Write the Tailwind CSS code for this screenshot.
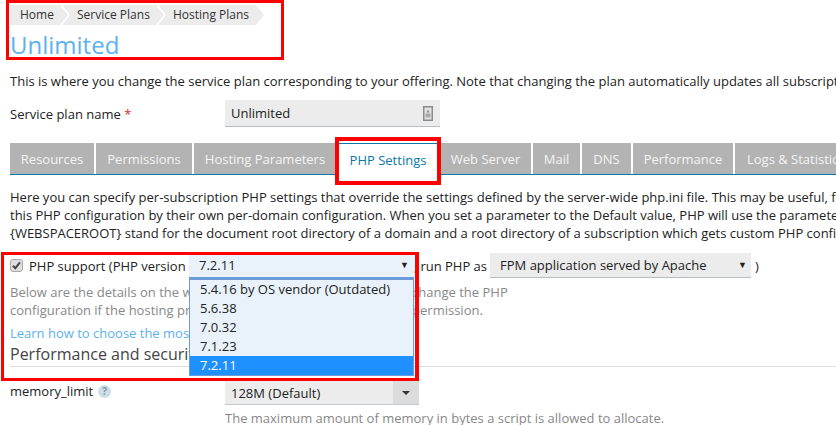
<!DOCTYPE html>
<html lang="en">
<head>
  <meta charset="UTF-8" />
  <title>Service Plan - Unlimited</title>
  <script src="https://cdn.jsdelivr.net/npm/@tailwindcss/browser@4"></script>
</head>
<body class="bg-white">
  <div class="relative w-[836px] h-[425px] overflow-hidden pl-[10px] pt-[5px] font-['Open_Sans',sans-serif] text-[13px] leading-[18px] text-[#222] whitespace-nowrap">

    <!-- breadcrumbs -->
    <div class="flex h-[20px] items-center text-[12px] text-[#333]">
      <div class="flex h-[20px] w-[58px] items-center pl-[10px] bg-[#ececec] [clip-path:polygon(0_0,50px_0,58px_10px,50px_100%,0_100%)]">Home</div>
      <div class="flex h-[20px] w-[102px] -ml-[6px] items-center pl-[15px] bg-[#ececec] [clip-path:polygon(0_0,94px_0,102px_10px,94px_100%,0_100%,8px_10px)]">Service Plans</div>
      <div class="flex h-[20px] w-[106px] -ml-[6px] items-center pl-[15px] bg-[#ececec] [clip-path:polygon(0_0,98px_0,106px_10px,98px_100%,0_100%,8px_10px)]">Hosting Plans</div>
    </div>
    <h1 class="mt-[3px] h-[33px] text-[24px] leading-[33px] text-[#5cb1ee]">Unlimited</h1>

    <p class="mt-[11px]">This is where you change the service plan corresponding to your offering. Note that changing the plan automatically updates all subscriptions based on it.</p>

    <div class="mt-[10px] flex items-center h-[27px]">
      <div class="w-[215px]">Service plan name <span class="text-[#e0271c]">*</span></div>
      <div class="flex h-[27px] w-[215px] items-center justify-between bg-[#ececec] border-b border-[#b5bcc2] pl-[6px] pr-[7px]">
        <span>Unlimited</span>
        <svg width="10" height="15" viewBox="0 0 10 15"><rect x="0.75" y="0.75" width="8.5" height="13.5" fill="#e4e4e4" stroke="#8a8a8a" stroke-width="1.5"/><path d="M5 3.5l1.5 3h-3z" fill="#8a8a8a"/><rect x="2.5" y="7.5" width="5" height="4" fill="#a8a8a8"/></svg>
      </div>
    </div>

    <!-- tabs -->
    <div class="mt-[16px] flex gap-[2px] h-[32px] border-b border-[#0b78a6] text-[13px] text-[#f4f4f4]">
      <div class="flex h-[31px] w-[84px] shrink-0 items-center justify-center bg-[#b3b3b3]">Resources</div>
      <div class="flex h-[31px] w-[96px] shrink-0 items-center justify-center bg-[#b3b3b3]">Permissions</div>
      <div class="flex h-[31px] w-[142px] shrink-0 items-center justify-center bg-[#b3b3b3]">Hosting Parameters</div>
      <div class="flex h-[32px] w-[101px] shrink-0 items-center justify-center bg-white border border-b-0 border-[#0b78a6] pr-[1px] text-[#0b78a6]">PHP Settings</div>
      <div class="flex h-[31px] w-[90px] shrink-0 items-center justify-center bg-[#b3b3b3] pr-[1px]">Web Server</div>
      <div class="flex h-[31px] w-[47px] shrink-0 items-center justify-center bg-[#b3b3b3]">Mail</div>
      <div class="flex h-[31px] w-[49px] shrink-0 items-center justify-center bg-[#b3b3b3]">DNS</div>
      <div class="flex h-[31px] w-[100px] shrink-0 items-center justify-center bg-[#b3b3b3]">Performance</div>
      <div class="flex h-[31px] w-[120px] shrink-0 items-center pl-[12px] bg-[#b3b3b3]">Logs &amp; Statistics</div>
    </div>

    <p class="mt-[13px]">Here you can specify per-subscription PHP settings that override the settings defined by the server-wide php.ini file. This may be useful, for example</p>
    <p>this PHP configuration by their own per-domain configuration. When you set a parameter to the Default value, PHP will use the parameter value</p>
    <p>{WEBSPACEROOT} stand for the document root directory of a domain and a root directory of a subscription which gets custom PHP configuration</p>

    <!-- php support row -->
    <div class="mt-[11px] flex h-[25px] items-center">
      <span class="flex h-[13px] w-[13px] shrink-0 items-center justify-center rounded-[3px] border border-[#aaa] bg-[#dedede]">
        <svg width="9" height="9" viewBox="0 0 9 9"><path d="M1 4.8l2.3 2.5 4.6-6" fill="none" stroke="#444" stroke-width="2"/></svg>
      </span>
      <span class="ml-[6px] w-[160px]">PHP support (PHP version</span>
      <div class="flex h-[25px] w-[225px] shrink-0 items-center justify-between bg-[#e9f2fa] border-b border-[#6d9ad8] pl-[10px] pr-[5px]">
        <span>7.2.11</span><span class="text-[9px]">▼</span>
      </div>
      <span>,</span>
      <span class="ml-[3px]">run PHP as</span>
      <div class="ml-[3px] flex h-[25px] w-[261px] shrink-0 items-center justify-between bg-[#ececec] border-b border-[#b5bcc2] pl-[10px] pr-[1px]">
        <span>FPM application served by Apache</span><span class="w-[12px] text-[9px]">▼</span>
      </div>
      <span class="ml-[4px]">)</span>
    </div>

    <p class="mt-[5px] text-[#888]">Below are the details on the website's PHP version in use. You can change the PHP</p>
    <p class="text-[#888]">configuration if the hosting provider has granted you the required permission.</p>
    <p class="mt-[5px] text-[#5cb1ee]">Learn how to choose the most suitable PHP version</p>
    <h2 class="h-[24px] text-[16px] leading-[24px] text-[#444]">Performance and security settings</h2>
    <div class="h-px w-[826px] bg-[#ddd]"></div>

    <div class="mt-[15px] flex h-[24px] items-start">
      <div class="flex w-[215px] items-center gap-[5px]">memory_limit
        <span class="flex h-[13px] w-[13px] items-center justify-center rounded-full bg-[#cddde6] text-[10px] font-bold leading-none text-[#7d98a8]">?</span>
      </div>
      <div class="-mt-[1px] flex h-[24px] w-[194px] items-center bg-[#ececec] border-b border-[#c4c9cd]">
        <span class="flex-1 pl-[6px]">128M (Default)</span>
        <span class="flex h-[23px] w-[26px] items-center justify-center bg-[#dcdcdc]"><span class="h-0 w-0 border-x-[4px] border-t-[4px] border-x-transparent border-t-[#333]"></span></span>
      </div>
    </div>
    <p class="ml-[215px] mt-[3px] text-[#888]">The maximum amount of memory in bytes a script is allowed to allocate.</p>

    <!-- open dropdown -->
    <ul class="absolute left-[189px] top-[278px] w-[225px] border border-t-2 border-[#6d9ad8] bg-[#e9f2fa] text-[13px] leading-[19px] text-[#222]">
      <li class="pl-[10px]">5.4.16 by OS vendor (Outdated)</li>
      <li class="pl-[10px]">5.6.38</li>
      <li class="pl-[10px]">7.0.32</li>
      <li class="pl-[10px]">7.1.23</li>
      <li class="bg-[#1e90ff] pl-[10px] text-white">7.2.11</li>
    </ul>

    <!-- annotation boxes -->
    <div class="absolute left-[6px] top-[0px] h-[60px] w-[278px] border-[3px] border-[#f00]"></div>
    <div class="absolute left-[335px] top-[137px] h-[48px] w-[106px] border-[4px] border-[#f00]"></div>
    <div class="absolute left-[1px] top-[252px] h-[129px] w-[418px] border-[3px] border-r-[4px] border-[#f00]"></div>
  </div>
</body>
</html>
